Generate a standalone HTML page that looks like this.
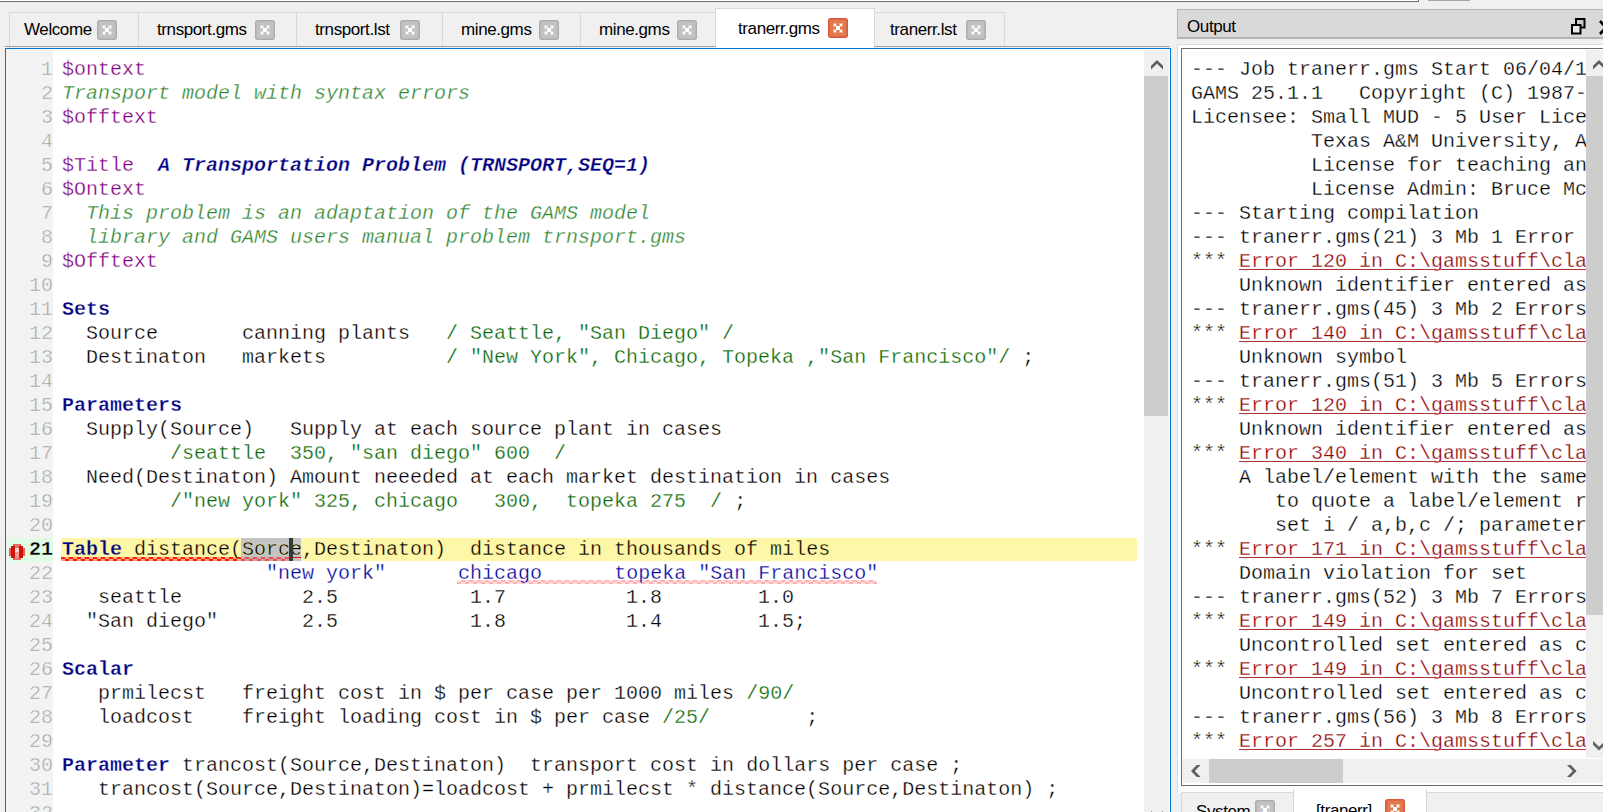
<!DOCTYPE html>
<html><head><meta charset="utf-8">
<style>
html,body{margin:0;padding:0;}
body{width:1603px;height:812px;overflow:hidden;background:#f0f0f0;position:relative;font-family:"Liberation Sans",sans-serif;}
.abs{position:absolute;}
#topbox{left:0;top:0;width:1418px;height:1px;background:#fff;border-bottom:1px solid #6e6e6e;border-right:1px solid #6e6e6e;}
#topbar{left:1428px;top:0;width:42px;height:1px;background:#a6a6a6;}
.tab{position:absolute;border:1px solid #d9d9d9;border-bottom:none;box-sizing:border-box;font-size:17px;letter-spacing:-0.4px;color:#000;}
.tab .t{position:absolute;white-space:nowrap;}
.cl{position:absolute;width:20px;height:20px;}
.cl svg{position:absolute;left:0;top:0;}
#tabline{left:5px;top:46px;width:1165px;height:1px;background:#a0a0a0;}
#editor{left:5px;top:48px;width:1166px;height:780px;border:1px solid #0078d7;box-sizing:border-box;background:#fff;}
#gutter{left:6px;top:49px;width:47px;height:780px;background:#f3f3f3;}
#l21g{left:7px;top:538px;width:46px;height:24px;background:#e0fbe6;}
#l21{left:61px;top:538px;width:1076px;height:23px;background:#fff7a8;}
#sel{left:241px;top:538px;width:60px;height:23px;background:#c4c4c4;}
#caret{left:289px;top:538px;width:4px;height:23px;background:#383838;}
#erricon{left:9px;top:544px;line-height:0;}
.wave{height:4px;background:
 repeating-linear-gradient(90deg,#ff1a0a 0 4px,#ffa878 4px 8px) 0 0/100% 2px no-repeat,
 repeating-linear-gradient(90deg,#ffa878 0 4px,#ff1a0a 4px 8px) 0 2px/100% 2px no-repeat;}
.wave3{height:4px;background:
 repeating-linear-gradient(90deg,#d4a4a4 0 4px,#e25454 4px 8px) 0 0/100% 2px no-repeat,
 repeating-linear-gradient(90deg,#e25454 0 4px,#d4a4a4 4px 8px) 0 2px/100% 2px no-repeat;}
.wave2{height:4px;background:
 repeating-linear-gradient(90deg,#ffe0e0 0 4px,#ffb0b0 4px 8px) 0 0/100% 2px no-repeat,
 repeating-linear-gradient(90deg,#ffb0b0 0 4px,#ffe0e0 4px 8px) 0 2px/100% 2px no-repeat;}
.code{-webkit-text-stroke:0.3px #fff;position:absolute;left:62px;font-family:"Liberation Mono",monospace;font-size:20px;line-height:24px;white-space:pre;color:#000;}
.ln{-webkit-text-stroke:0.5px #f3f3f3;position:absolute;left:6px;width:47px;text-align:right;font-family:"Liberation Mono",monospace;font-size:20px;line-height:24px;color:#a0a0a0;white-space:pre;}
.ln b{color:#000;-webkit-text-stroke:0.3px #e0fbe6;}
.y21{-webkit-text-stroke:0.3px #fff7a8;}
.kw{color:#000080;font-weight:bold;}
.dol{color:#800080;}
.cm{color:#2f862f;font-style:italic;}
.tt{color:#000080;font-weight:bold;font-style:italic;}
.el{color:#046804;}
.hd{color:#0000a0;}
#vsb{left:1144px;top:50px;width:25px;height:770px;background:#f0f0f0;}
.thumb{position:absolute;background:#cdcdcd;}
.arr{position:absolute;line-height:0;}
#ohdr{left:1177px;top:9px;width:440px;height:30px;box-sizing:border-box;background:#d9d9d9;border-top:1px solid #b4b4b4;border-bottom:2px solid #b4b4b4;border-left:1px solid #b4b4b4;font-size:17px;letter-spacing:-0.4px;color:#000;}
#oframe{left:1177px;top:44px;width:440px;height:749px;box-sizing:border-box;border-left:1px solid #dadada;border-top:1px solid #dadada;background:#fff;}
#obox{left:1181px;top:48px;width:440px;height:738px;box-sizing:border-box;border-left:1px solid #6e6e6e;border-top:1px solid #6e6e6e;border-bottom:1px solid #6e6e6e;background:#fff;overflow:hidden;}
#otext{-webkit-text-stroke:0.3px #fff;left:9px;top:9px;width:395px;overflow:hidden;height:700px;font-family:"Liberation Mono",monospace;font-size:20px;line-height:24px;white-space:pre;color:#000;}
.lnk{color:#900000;background:linear-gradient(#a33,#a33) 0 19px/100% 1px no-repeat;}
#ovsb{left:404px;top:1px;width:30px;height:708px;background:#f0f0f0;}
#ohsb{left:0;top:710px;width:440px;height:24px;background:#f0f0f0;}
.btab{height:30px;}
.act{border-top:none;}

</style></head><body>
<div id="topbox" class="abs"></div><div id="topbar" class="abs"></div>
<div class="tab" style="left:9px;top:12px;width:130px;height:34px;background:#f0f0f0;"><span class="t" style="left:14px;top:7px">Welcome</span><div class="cl" style="left:87px;top:7px"><svg width="20" height="20" viewBox="0 0 20 20"><rect x="0.75" y="0.75" width="18.5" height="18.5" rx="2" fill="#c2c2c2" stroke="#adadad" stroke-width="1.5"/><g fill="#fff" opacity=".35"><rect x="5" y="5" width="4" height="4"/><rect x="11" y="5" width="4" height="4"/><rect x="5" y="11" width="4" height="4"/><rect x="11" y="11" width="4" height="4"/></g><g fill="#fff"><rect x="8" y="8" width="4" height="4"/><rect x="6" y="6" width="2" height="2"/><rect x="12" y="6" width="2" height="2"/><rect x="6" y="12" width="2" height="2"/><rect x="12" y="12" width="2" height="2"/></g></svg></div></div>
<div class="tab" style="left:138px;top:12px;width:159px;height:34px;background:#f0f0f0;"><span class="t" style="left:18px;top:7px">trnsport.gms</span><div class="cl" style="left:116px;top:7px"><svg width="20" height="20" viewBox="0 0 20 20"><rect x="0.75" y="0.75" width="18.5" height="18.5" rx="2" fill="#c2c2c2" stroke="#adadad" stroke-width="1.5"/><g fill="#fff" opacity=".35"><rect x="5" y="5" width="4" height="4"/><rect x="11" y="5" width="4" height="4"/><rect x="5" y="11" width="4" height="4"/><rect x="11" y="11" width="4" height="4"/></g><g fill="#fff"><rect x="8" y="8" width="4" height="4"/><rect x="6" y="6" width="2" height="2"/><rect x="12" y="6" width="2" height="2"/><rect x="6" y="12" width="2" height="2"/><rect x="12" y="12" width="2" height="2"/></g></svg></div></div>
<div class="tab" style="left:296px;top:12px;width:147px;height:34px;background:#f0f0f0;"><span class="t" style="left:18px;top:7px">trnsport.lst</span><div class="cl" style="left:103px;top:7px"><svg width="20" height="20" viewBox="0 0 20 20"><rect x="0.75" y="0.75" width="18.5" height="18.5" rx="2" fill="#c2c2c2" stroke="#adadad" stroke-width="1.5"/><g fill="#fff" opacity=".35"><rect x="5" y="5" width="4" height="4"/><rect x="11" y="5" width="4" height="4"/><rect x="5" y="11" width="4" height="4"/><rect x="11" y="11" width="4" height="4"/></g><g fill="#fff"><rect x="8" y="8" width="4" height="4"/><rect x="6" y="6" width="2" height="2"/><rect x="12" y="6" width="2" height="2"/><rect x="6" y="12" width="2" height="2"/><rect x="12" y="12" width="2" height="2"/></g></svg></div></div>
<div class="tab" style="left:442px;top:12px;width:139px;height:34px;background:#f0f0f0;"><span class="t" style="left:18px;top:7px">mine.gms</span><div class="cl" style="left:96px;top:7px"><svg width="20" height="20" viewBox="0 0 20 20"><rect x="0.75" y="0.75" width="18.5" height="18.5" rx="2" fill="#c2c2c2" stroke="#adadad" stroke-width="1.5"/><g fill="#fff" opacity=".35"><rect x="5" y="5" width="4" height="4"/><rect x="11" y="5" width="4" height="4"/><rect x="5" y="11" width="4" height="4"/><rect x="11" y="11" width="4" height="4"/></g><g fill="#fff"><rect x="8" y="8" width="4" height="4"/><rect x="6" y="6" width="2" height="2"/><rect x="12" y="6" width="2" height="2"/><rect x="6" y="12" width="2" height="2"/><rect x="12" y="12" width="2" height="2"/></g></svg></div></div>
<div class="tab" style="left:580px;top:12px;width:137px;height:34px;background:#f0f0f0;"><span class="t" style="left:18px;top:7px">mine.gms</span><div class="cl" style="left:96px;top:7px"><svg width="20" height="20" viewBox="0 0 20 20"><rect x="0.75" y="0.75" width="18.5" height="18.5" rx="2" fill="#c2c2c2" stroke="#adadad" stroke-width="1.5"/><g fill="#fff" opacity=".35"><rect x="5" y="5" width="4" height="4"/><rect x="11" y="5" width="4" height="4"/><rect x="5" y="11" width="4" height="4"/><rect x="11" y="11" width="4" height="4"/></g><g fill="#fff"><rect x="8" y="8" width="4" height="4"/><rect x="6" y="6" width="2" height="2"/><rect x="12" y="6" width="2" height="2"/><rect x="6" y="12" width="2" height="2"/><rect x="12" y="12" width="2" height="2"/></g></svg></div></div>
<div class="tab" style="left:874px;top:12px;width:131px;height:34px;background:#f0f0f0;"><span class="t" style="left:15px;top:7px">tranerr.lst</span><div class="cl" style="left:91px;top:7px"><svg width="20" height="20" viewBox="0 0 20 20"><rect x="0.75" y="0.75" width="18.5" height="18.5" rx="2" fill="#c2c2c2" stroke="#adadad" stroke-width="1.5"/><g fill="#fff" opacity=".35"><rect x="5" y="5" width="4" height="4"/><rect x="11" y="5" width="4" height="4"/><rect x="5" y="11" width="4" height="4"/><rect x="11" y="11" width="4" height="4"/></g><g fill="#fff"><rect x="8" y="8" width="4" height="4"/><rect x="6" y="6" width="2" height="2"/><rect x="12" y="6" width="2" height="2"/><rect x="6" y="12" width="2" height="2"/><rect x="12" y="12" width="2" height="2"/></g></svg></div></div>
<div class="tab" style="left:715px;top:8px;width:160px;height:40px;background:#fff;z-index:3;"><span class="t" style="left:22px;top:10px">tranerr.gms</span><div class="cl" style="left:112px;top:9px"><svg width="20" height="20" viewBox="0 0 20 20"><rect x="0.75" y="0.75" width="18.5" height="18.5" rx="2" fill="#e3794f" stroke="#dd573a" stroke-width="1.5"/><g fill="#fff" opacity=".35"><rect x="5" y="5" width="4" height="4"/><rect x="11" y="5" width="4" height="4"/><rect x="5" y="11" width="4" height="4"/><rect x="11" y="11" width="4" height="4"/></g><g fill="#fff"><rect x="8" y="8" width="4" height="4"/><rect x="6" y="6" width="2" height="2"/><rect x="12" y="6" width="2" height="2"/><rect x="6" y="12" width="2" height="2"/><rect x="12" y="12" width="2" height="2"/></g></svg></div></div>
<div id="tabline" class="abs"></div>
<div id="editor" class="abs"></div>
<div id="gutter" class="abs"></div>
<div id="l21g" class="abs"></div><div id="l21" class="abs"></div>
<div id="sel" class="abs"></div>
<div id="erricon" class="abs"><svg width="16" height="16" viewBox="0 0 16 16"><rect x="4" y="0" width="8" height="16" fill="#e2604f"/><rect x="0" y="4" width="16" height="8" fill="#e2604f"/><rect x="2" y="2" width="12" height="12" fill="#d11307"/><rect x="6" y="0" width="4" height="16" fill="#e2766a"/><rect x="6" y="4" width="4" height="4" fill="#f6d2ce"/><rect x="6" y="8" width="4" height="6" fill="#ec9a92"/></svg></div>
<div class="wave abs" style="left:61px;top:557px;width:229px"></div>
<div class="wave3 abs" style="left:241px;top:557px;width:48px"></div><div class="abs" style="left:293px;top:557px;width:8px;height:1px;background:#f01010"></div>
<div class="wave2 abs" style="left:457px;top:580px;width:420px"></div>
<div class="ln abs" style="top:58px">1
2
3
4
5
6
7
8
9
10
11
12
13
14
15
16
17
18
19
20
<b>21</b>
22
23
24
25
26
27
28
29
30
31
32</div>
<div class="code abs" style="top:58px"><span class="dol">$ontext</span>
<span class="cm">Transport model with syntax errors</span>
<span class="dol">$offtext</span>

<span class="dol">$Title</span>  <span class="tt">A Transportation Problem (TRNSPORT,SEQ=1)</span>
<span class="dol">$Ontext</span>
<span class="cm">  This problem is an adaptation of the GAMS model</span>
<span class="cm">  library and GAMS users manual problem trnsport.gms</span>
<span class="dol">$Offtext</span>

<span class="kw">Sets</span>
  Source       canning plants   <span class="el">/ Seattle, "San Diego" /</span>
  Destinaton   markets          <span class="el">/ "New York", Chicago, Topeka ,"San Francisco"/</span> ;

<span class="kw">Parameters</span>
  Supply(Source)   Supply at each source plant in cases
         <span class="el">/seattle  350, "san diego" 600  /</span>
  Need(Destinaton) Amount neeeded at each market destination in cases
         <span class="el">/"new york" 325, chicago   300,  topeka 275  /</span> ;

<span class="y21"><span class="kw">Table</span> distance(Sorce,Destinaton)  distance in thousands of miles</span>
                 <span class="hd">"new york"</span>      <span class="hd">chicago</span>      <span class="hd">topeka</span> <span class="hd">"San Francisco"</span>
   seattle          2.5           1.7          1.8        1.0
  "San diego"       2.5           1.8          1.4        1.5;

<span class="kw">Scalar</span>
   prmilecst   freight cost in $ per case per 1000 miles <span class="el">/90/</span>
   loadcost    freight loading cost in $ per case <span class="el">/25/</span>        ;

<span class="kw">Parameter</span> trancost(Source,Destinaton)  transport cost in dollars per case ;
   trancost(Source,Destinaton)=loadcost + prmilecst * distance(Source,Destinaton) ;
</div>
<div id="caret" class="abs"></div>
<div id="vsb" class="abs"><div class="thumb" style="left:0;top:26px;width:24px;height:340px"></div><div class="arr" style="left:7px;top:10px"><svg width="12" height="10" viewBox="0 0 12 10"><path d="M0 5.8 L6 0 L12 5.8 L12 9.6 L6 3.8 L0 9.6 Z" fill="#606060"/></svg></div><div class="arr" style="left:7px;top:761px"><svg width="12" height="10" viewBox="0 0 12 10"><path d="M0 3.8 L6 9.6 L12 3.8 L12 0 L6 5.8 L0 0 Z" fill="#606060"/></svg></div></div>
<div id="ohdr" class="abs"><span style="position:absolute;left:9px;top:7px">Output</span><div class="abs" style="left:393px;top:8px"><svg width="16" height="17" viewBox="0 0 16 17"><rect x="5" y="1" width="8.5" height="8.5" fill="#c8c8c8" stroke="#000" stroke-width="2"/><rect x="1" y="7" width="8.5" height="8.5" fill="#e6e6e6" stroke="#000" stroke-width="2"/></svg></div><svg class="abs" style="left:421px;top:10px" width="20" height="16" viewBox="0 0 20 16"><path d="M1 1 L13 14 M1 14 L13 1" stroke="#000" stroke-width="2.6"/></svg></div>
<div id="oframe" class="abs"></div>
<div id="obox" class="abs"><div id="otext" class="abs">--- Job tranerr.gms Start 06/04/18 11:02:27 25.1.1 r66732 WEX-WEI x86 64bit/MS Windows
GAMS 25.1.1   Copyright (C) 1987-2018 GAMS Development. All rights reserved
Licensee: Small MUD - 5 User License                       S180308/0001AP-GEN
          Texas A&amp;M University, Agricultural Economics Department     DC1123
          License for teaching and research at degree granting institutions
          License Admin: Bruce McCarl, mccarl@tamu.edu
--- Starting compilation
--- tranerr.gms(21) 3 Mb 1 Error
*** <span class="lnk">Error 120 in C:\gamsstuff\class\tranerr.gms</span>
    Unknown identifier entered as set
--- tranerr.gms(45) 3 Mb 2 Errors
*** <span class="lnk">Error 140 in C:\gamsstuff\class\tranerr.gms</span>
    Unknown symbol
--- tranerr.gms(51) 3 Mb 5 Errors
*** <span class="lnk">Error 120 in C:\gamsstuff\class\tranerr.gms</span>
    Unknown identifier entered as set
*** <span class="lnk">Error 340 in C:\gamsstuff\class\tranerr.gms</span>
    A label/element with the same name exist. You may have forgotten
       to quote a label/element reference. For example,
       set i / a,b,c /; parameter x(i); x(&#x27;a&#x27;) = 10;
*** <span class="lnk">Error 171 in C:\gamsstuff\class\tranerr.gms</span>
    Domain violation for set
--- tranerr.gms(52) 3 Mb 7 Errors
*** <span class="lnk">Error 149 in C:\gamsstuff\class\tranerr.gms</span>
    Uncontrolled set entered as constant
*** <span class="lnk">Error 149 in C:\gamsstuff\class\tranerr.gms</span>
    Uncontrolled set entered as constant
--- tranerr.gms(56) 3 Mb 8 Errors
*** <span class="lnk">Error 257 in C:\gamsstuff\class\tranerr.gms</span></div><div id="ovsb" class="abs"><div class="thumb" style="left:0;top:26px;width:17px;height:539px"></div><div class="arr" style="left:7px;top:10px"><svg width="12" height="10" viewBox="0 0 12 10"><path d="M0 5.8 L6 0 L12 5.8 L12 9.6 L6 3.8 L0 9.6 Z" fill="#606060"/></svg></div><div class="arr" style="left:7px;top:691px"><svg width="12" height="10" viewBox="0 0 12 10"><path d="M0 3.8 L6 9.6 L12 3.8 L12 0 L6 5.8 L0 0 Z" fill="#606060"/></svg></div></div><div id="ohsb" class="abs"><div class="thumb" style="left:27px;top:0;width:134px;height:24px"></div><div class="arr" style="left:9px;top:6px"><svg width="10" height="12" viewBox="0 0 10 12"><path d="M5.8 0 L0 6 L5.8 12 L9.6 12 L3.8 6 L9.6 0 Z" fill="#606060"/></svg></div><div class="arr" style="left:385px;top:6px"><svg width="10" height="12" viewBox="0 0 10 12"><path d="M3.8 0 L9.6 6 L3.8 12 L0 12 L5.8 6 L0 0 Z" fill="#606060"/></svg></div></div></div>
<div class="tab btab" style="left:1181px;top:792px;width:113px;height:30px;background:#f0f0f0;"><span class="t" style="left:14px;top:9px">System</span><div class="cl" style="left:73px;top:7px"><svg width="20" height="20" viewBox="0 0 20 20"><rect x="0.75" y="0.75" width="18.5" height="18.5" rx="2" fill="#c2c2c2" stroke="#adadad" stroke-width="1.5"/><g fill="#fff" opacity=".35"><rect x="5" y="5" width="4" height="4"/><rect x="11" y="5" width="4" height="4"/><rect x="5" y="11" width="4" height="4"/><rect x="11" y="11" width="4" height="4"/></g><g fill="#fff"><rect x="8" y="8" width="4" height="4"/><rect x="6" y="6" width="2" height="2"/><rect x="12" y="6" width="2" height="2"/><rect x="6" y="12" width="2" height="2"/><rect x="12" y="12" width="2" height="2"/></g></svg></div></div>
<div class="tab btab" style="left:1426px;top:792px;width:190px;height:30px;background:#f0f0f0"></div>
<div class="tab btab act" style="left:1293px;top:789px;width:134px;height:30px;background:#fff;z-index:3;"><span class="t" style="left:22px;top:12px">[tranerr]</span><div class="cl" style="left:91px;top:10px"><svg width="20" height="20" viewBox="0 0 20 20"><rect x="0.75" y="0.75" width="18.5" height="18.5" rx="2" fill="#e3794f" stroke="#dd573a" stroke-width="1.5"/><g fill="#fff" opacity=".35"><rect x="5" y="5" width="4" height="4"/><rect x="11" y="5" width="4" height="4"/><rect x="5" y="11" width="4" height="4"/><rect x="11" y="11" width="4" height="4"/></g><g fill="#fff"><rect x="8" y="8" width="4" height="4"/><rect x="6" y="6" width="2" height="2"/><rect x="12" y="6" width="2" height="2"/><rect x="6" y="12" width="2" height="2"/><rect x="12" y="12" width="2" height="2"/></g></svg></div></div>
</body></html>
